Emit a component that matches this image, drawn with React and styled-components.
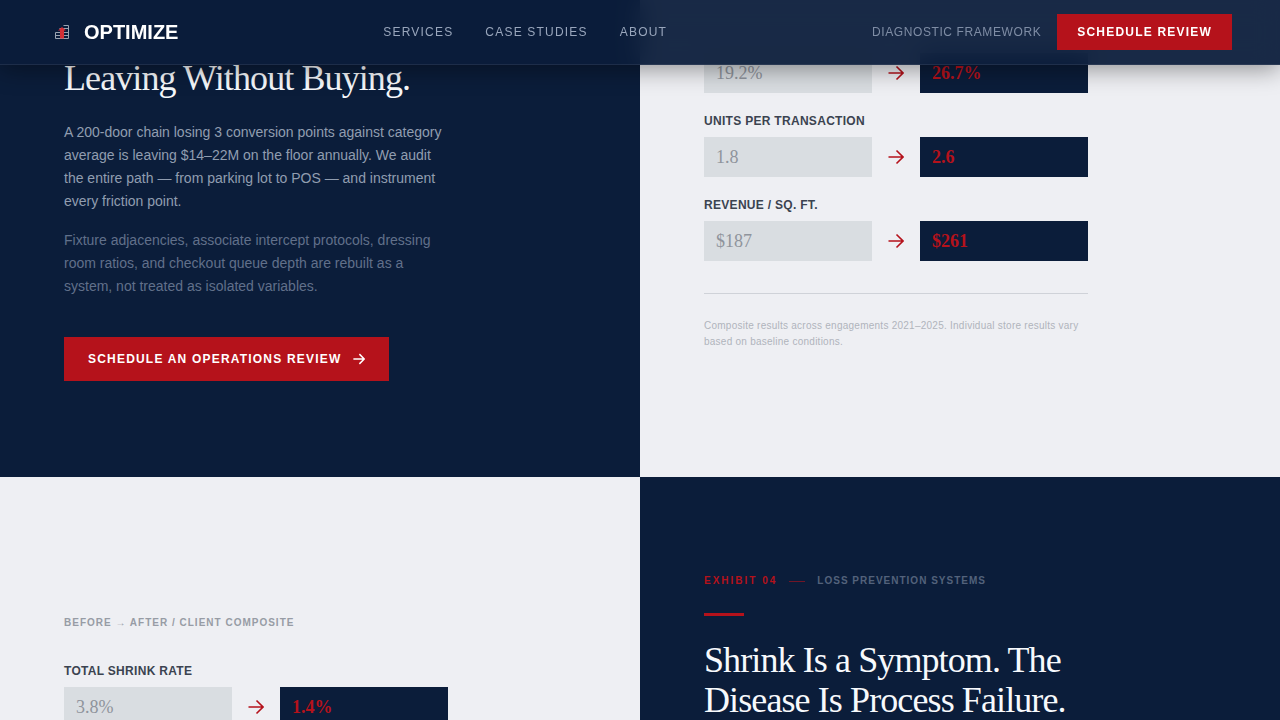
import React from "react";
import styled, { createGlobalStyle } from "styled-components";

const navy = "#0b1d3a";
const paper = "#eeeff3";
const red = "#b5121b";
const sans = `"Liberation Sans", Arial, sans-serif`;
const serif = `"Liberation Serif", "Times New Roman", serif`;

const GlobalStyle = createGlobalStyle`
  *, *::before, *::after { box-sizing: border-box; }
  body { margin: 0; background: ${paper}; font-family: ${sans}; }
  h2, h3, p, ul, dl, dd { margin: 0; padding: 0; }
`;

const Page = styled.div`
  display: flex;
  flex-direction: column;
  height: 100vh;
  overflow: hidden;
`;

const Header = styled.header`
  position: fixed;
  inset: 0 0 auto 0;
  z-index: 10;
  display: flex;
  align-items: center;
  justify-content: space-between;
  padding: 14px 48px;
  background: rgba(11, 29, 58, 0.94);
  backdrop-filter: blur(12px);
  border-bottom: 1px solid rgba(255, 255, 255, 0.08);
  box-shadow: 0 4px 24px rgba(0, 0, 0, 0.4);
`;

const Brand = styled.a`
  display: flex;
  align-items: center;
  gap: 8px;
  color: #fff;
  font-size: 20px;
  line-height: 28px;
  font-weight: 700;
  text-decoration: none;
`;

const Nav = styled.nav`
  display: flex;
  gap: 32px;
`;

const NavLink = styled.a`
  color: ${(p) => (p.$quiet ? "#7f8da5" : "#99a6bc")};
  font-size: 12px;
  line-height: 16px;
  letter-spacing: ${(p) => (p.$quiet ? "0.05em" : "0.1em")};
  text-decoration: none;
`;

const Actions = styled.div`
  display: flex;
  align-items: center;
  gap: 16px;
`;

const Button = styled.button`
  display: inline-flex;
  align-items: center;
  align-self: flex-start;
  gap: 12px;
  border: 0;
  padding: ${(p) => (p.$large ? "14px 24px" : "10px 20px")};
  background: ${red};
  color: #fff;
  font: 700 12px/16px ${sans};
  letter-spacing: 0.1em;
  cursor: pointer;
`;

const Band = styled.section`
  display: grid;
  grid-template-columns: 1fr 1fr;
  flex: ${(p) => (p.$fill ? "1 0 auto" : "none")};
`;

const Panel = styled.div`
  display: flex;
  flex-direction: column;
  padding: ${(p) => p.$top}px 64px 96px;
  background: ${(p) => (p.$dark ? navy : paper)};
`;

const Heading = styled.h2`
  max-width: 400px;
  color: #f7f9fc;
  font: 400 36px/40px ${serif};
  letter-spacing: -0.025em;
`;

const Copy = styled.div`
  display: flex;
  flex-direction: column;
  gap: 16px;
  max-width: 384px;
  margin: 23px 0 39px;
`;

const Paragraph = styled.p`
  color: ${(p) => (p.$muted ? "#61708a" : "#919db0")};
  font-size: 14px;
  line-height: 23px;
`;

const Eyebrow = styled.p`
  display: flex;
  align-items: center;
  gap: 12px;
  color: #53627b;
  font-size: 10px;
  line-height: 16px;
  font-weight: 700;
  letter-spacing: 0.1em;
`;

const Exhibit = styled.span`
  color: ${red};
  letter-spacing: 0.2em;
`;

const Dash = styled.span`
  width: 16px;
  height: 1px;
  background: ${red};
  opacity: 0.6;
`;

const Rule = styled.div`
  width: 40px;
  height: 3px;
  margin: 24px 0;
  background: ${red};
`;

const Caption = styled.h3`
  margin-bottom: 32px;
  color: #979ca5;
  font-size: 10px;
  line-height: 16px;
  font-weight: 700;
  letter-spacing: 0.1em;
`;

const Metrics = styled.dl`
  display: flex;
  flex-direction: column;
  gap: 20px;
  max-width: 384px;
`;

const MetricName = styled.dt`
  margin-bottom: 8px;
  color: #3b4350;
  font-size: 12px;
  line-height: 16px;
  font-weight: 700;
  letter-spacing: 0.025em;
`;

const Comparison = styled.dd`
  display: grid;
  grid-template-columns: 1fr 48px 1fr;
  align-items: center;
  justify-items: center;
`;

const Value = styled.span`
  justify-self: stretch;
  padding: 8px 12px;
  background: ${(p) => (p.$after ? navy : "#d9dde1")};
  color: ${(p) => (p.$after ? red : "#8f949c")};
  font: ${(p) => (p.$after ? 700 : 400)} 18px/24px ${serif};
`;

const Footnote = styled.p`
  max-width: 384px;
  margin-top: 32px;
  padding-top: 24px;
  border-top: 1px solid #cfd2d8;
  color: #b0b4bc;
  font-size: 10px;
  line-height: 16px;
  letter-spacing: 0.025em;
`;

function Logo() {
  return (
    <svg width="28" height="28" viewBox="0 0 28 28" fill="none" aria-hidden="true">
      <g stroke="#9aa3b1" strokeWidth="1">
        <path d="M7.5 14.5h5v6h-5zM7.5 17.5h5" />
        <path d="M11.5 10.5h4M15.5 7.5h5v13h-9" />
        <path d="M15.5 10.5h5M15.5 14.5h5M15.5 17.5h5" />
      </g>
      <path d="M14 9l4 3.500h-2v8h-4v-8h-2z" fill="#d32f35" />
    </svg>
  );
}

function Arrow({ size, color }) {
  return (
    <svg width={size} height={size} viewBox="0 0 16 16" fill="none" stroke={color} strokeWidth={size > 12 ? 1.6 : 2} aria-hidden="true">
      <path d="M0.500 8h14.500M8.500 1.500L15 8l-6.500 6.500" />
    </svg>
  );
}

function Metric({ name, before, after }) {
  return (
    <div>
      {name && <MetricName>{name}</MetricName>}
      <Comparison>
        <Value>{before}</Value>
        <Arrow size={16} color={red} />
        <Value $after>{after}</Value>
      </Comparison>
    </div>
  );
}

export default function App() {
  return (
    <Page>
      <GlobalStyle />
      <Header>
        <Brand href="#">
          <Logo />
          OPTIMIZE
        </Brand>
        <Nav>
          <NavLink href="#services">SERVICES</NavLink>
          <NavLink href="#cases">CASE STUDIES</NavLink>
          <NavLink href="#about">ABOUT</NavLink>
        </Nav>
        <Actions>
          <NavLink $quiet href="#framework">DIAGNOSTIC FRAMEWORK</NavLink>
          <Button>SCHEDULE REVIEW</Button>
        </Actions>
      </Header>

      <Band>
        <Panel $dark $top={58}>
          <Heading>Leaving Without Buying.</Heading>
          <Copy>
            <Paragraph>
              A 200-door chain losing 3 conversion points against category average is leaving
              $14–22M on the floor annually. We audit the entire path — from parking lot to POS —
              and instrument every friction point.
            </Paragraph>
            <Paragraph $muted>
              Fixture adjacencies, associate intercept protocols, dressing room ratios, and
              checkout queue depth are rebuilt as a system, not treated as isolated variables.
            </Paragraph>
          </Copy>
          <Button $large>
            SCHEDULE AN OPERATIONS REVIEW
            <Arrow size={12} color="#fff" />
          </Button>
        </Panel>
        <Panel $top={53}>
          <Metrics>
            <Metric before="19.2%" after="26.7%" />
            <Metric name="UNITS PER TRANSACTION" before="1.8" after="2.6" />
            <Metric name="REVENUE / SQ. FT." before="$187" after="$261" />
          </Metrics>
          <Footnote>
            Composite results across engagements 2021–2025. Individual store results vary based on
            baseline conditions.
          </Footnote>
        </Panel>
      </Band>

      <Band $fill>
        <Panel $top={138}>
          <Caption>BEFORE → AFTER / CLIENT COMPOSITE</Caption>
          <Metrics>
            <Metric name="TOTAL SHRINK RATE" before="3.8%" after="1.4%" />
          </Metrics>
        </Panel>
        <Panel $dark $top={96}>
          <Eyebrow>
            <Exhibit>EXHIBIT 04</Exhibit>
            <Dash />
            LOSS PREVENTION SYSTEMS
          </Eyebrow>
          <Rule />
          <Heading>Shrink Is a Symptom. The Disease Is Process Failure.</Heading>
        </Panel>
      </Band>
    </Page>
  );
}
